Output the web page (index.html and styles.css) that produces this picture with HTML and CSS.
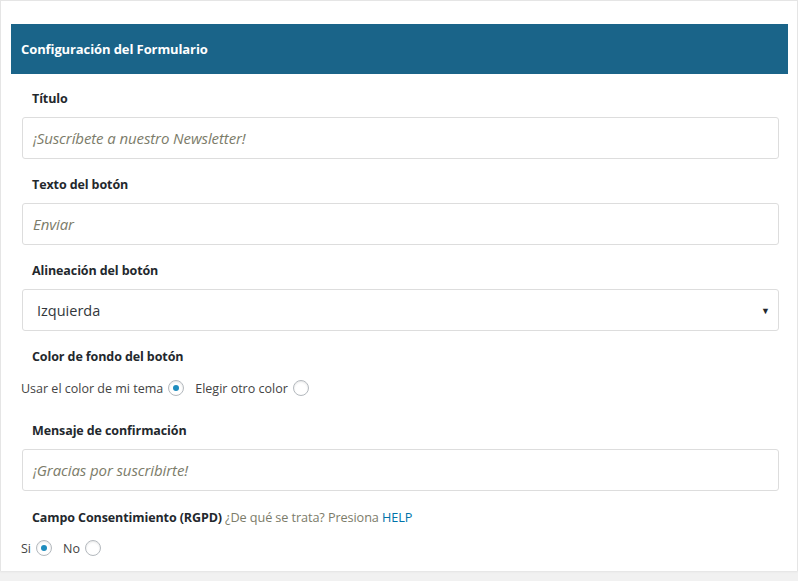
FILE: index.html
```html
<!DOCTYPE html>
<html lang="es">
<head>
<meta charset="utf-8">
<link rel="stylesheet" href="styles.css">
</head>
<body>
<div class="panel">
  <div class="panel-head">Configuración del Formulario</div>
  <div class="form">
    <div class="label">Título</div>
    <div class="input placeholder">¡Suscríbete a nuestro Newsletter!</div>

    <div class="label">Texto del botón</div>
    <div class="input placeholder">Enviar</div>

    <div class="label">Alineación del botón</div>
    <div class="input select"><span>Izquierda</span><span class="arrow">▼</span></div>

    <div class="label">Color de fondo del botón</div>
    <div class="radios first">
      <span>Usar el color de mi tema</span><span class="radio checked"></span>
      <span>Elegir otro color</span><span class="radio"></span>
    </div>

    <div class="label">Mensaje de confirmación</div>
    <div class="input placeholder">¡Gracias por suscribirte!</div>

    <div class="label">Campo Consentimiento (RGPD) <span class="hint">¿De qué se trata? Presiona <a class="help">HELP</a></span></div>
    <div class="radios last">
      <span>Si</span><span class="radio checked"></span>
      <span>No</span><span class="radio"></span>
    </div>
  </div>
</div>
</body>
</html>
```

FILE: styles.css
```css
html, body { margin: 0; padding: 0; }
body {
  background: #f1f1f1;
  font-family: "Open Sans", "Noto Sans", sans-serif;
  color: #444;
  width: 798px;
  height: 581px;
  overflow: hidden;
}
.panel {
  background: #fff;
  border: 1px solid #e5e5e5;
  border-bottom: none;
  box-shadow: 0 1px 2px rgba(0,0,0,.06);
  width: 798px;
  height: 571px;
  padding: 23px 0 0 10px;
  box-sizing: border-box;
}
.panel-head {
  background: #1a6489;
  color: #fff;
  width: 777px;
  height: 50px;
  box-sizing: border-box;
  padding-left: 10px;
  display: flex;
  align-items: center;
  font-weight: 700;
  font-size: 13px;
  letter-spacing: -0.1px;
}
.form {
  padding: 16px 0 0 11px;
  display: flex;
  flex-direction: column;
}
.label {
  font-weight: 700;
  font-size: 12.5px;
  color: #23282d;
  line-height: 18px;
  padding-left: 10px;
  letter-spacing: -0.1px;
}
.hint {
  font-weight: 400;
  font-size: 12.7px;
  color: #7c7c6a;
  letter-spacing: -0.1px;
}
.help { color: #0073aa; }
.input {
  margin-top: 9px;
  margin-bottom: 17px;
  width: 757px;
  height: 42px;
  box-sizing: border-box;
  border: 1px solid #ddd;
  border-radius: 3px;
  display: flex;
  align-items: center;
  padding-left: 10px;
  font-size: 15px;
}
.placeholder {
  font-style: italic;
  color: #7c7c6a;
  letter-spacing: -0.1px;
}
.select {
  color: #32373c;
  font-size: 14.5px;
  padding-left: 14px;
  padding-right: 8px;
  justify-content: space-between;
}
.arrow {
  font-size: 9px;
  color: #23282d;
}
.radios {
  display: flex;
  align-items: center;
  font-size: 12.5px;
  color: #444;
  height: 18px;
  margin-left: -1px;
}
.radios.first { margin-top: 13px; margin-bottom: 25px; }
.radios.last { margin-top: 12px; }
.radio {
  width: 16px;
  height: 16px;
  box-sizing: border-box;
  border: 1px solid #b4b9be;
  border-radius: 50%;
  margin: 0 11px 0 5px;
  display: inline-flex;
  align-items: center;
  justify-content: center;
  box-shadow: inset 0 1px 2px rgba(0,0,0,.1);
}
.radio.checked::after {
  content: "";
  width: 6px;
  height: 6px;
  border-radius: 50%;
  background: #1e8cbe;
}
```
